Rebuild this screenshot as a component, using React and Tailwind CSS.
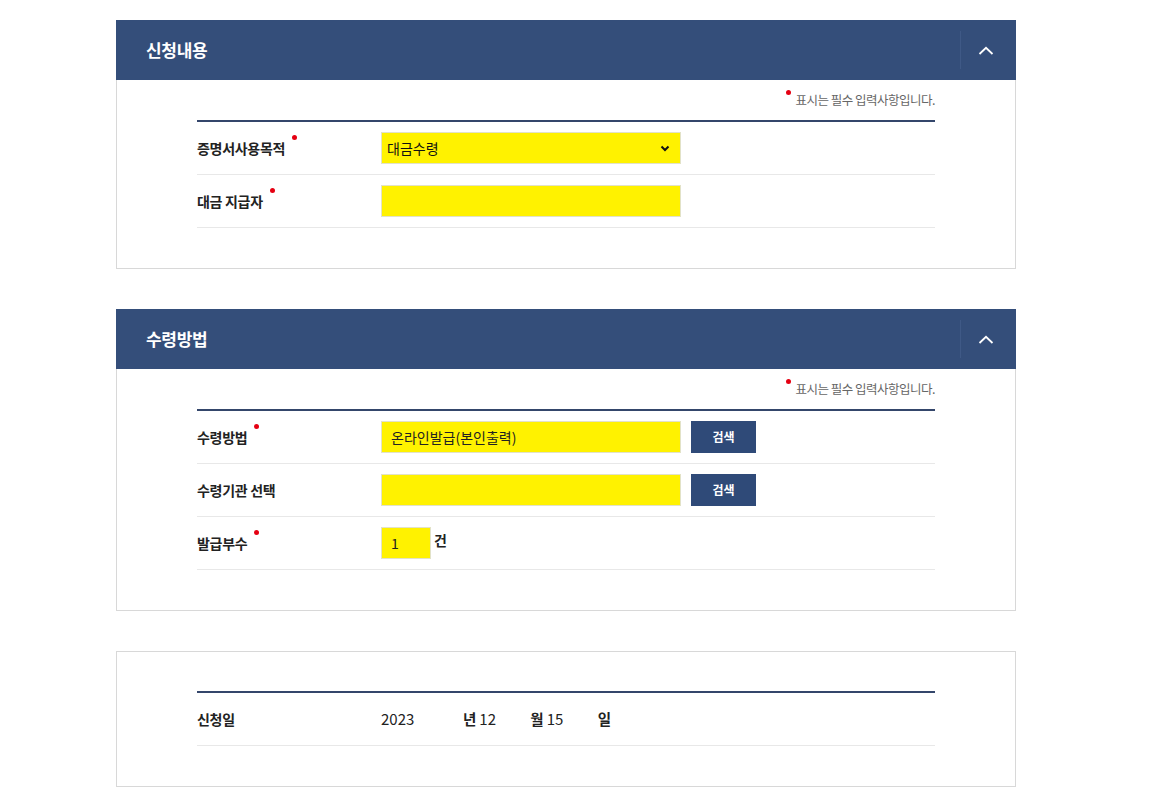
import React from "react";

const font = { fontFamily: '"Noto Sans CJK KR", "Noto Sans", sans-serif' };

function Dot() {
  return <span className="absolute right-[-12px] top-[-3px] w-[5px] h-[5px] rounded-full bg-[#e50012]" />;
}

function Label({ children, required }) {
  return (
    <div className="w-[184px] shrink-0 text-[14px] font-bold text-[#222] tracking-[-0.3px]">
      <span className="relative">
        {children}
        {required && <Dot />}
      </span>
    </div>
  );
}

function Header({ title }) {
  return (
    <div className="h-[60px] bg-[#344e7a] flex items-center">
      <div className="flex-1 pl-[30px] text-[17px] font-bold text-white tracking-[-0.3px]">{title}</div>
      <div className="h-[38px] w-px bg-[#2b4270] border-r border-[#3f5986]" />
      <div className="w-[55px] pr-[5px] flex items-center justify-center">
        <svg width="16" height="9" viewBox="0 0 16 9" fill="none">
          <path d="M1.5 8 L8 1.8 L14.5 8" stroke="white" strokeWidth="1.8" />
        </svg>
      </div>
    </div>
  );
}

function Note() {
  return (
    <div className="h-[40px] flex items-center justify-end text-[12.5px] text-[#666] tracking-[-0.5px]">
      <span className="relative">
        <span className="absolute left-[-9px] top-[-1px] w-[5px] h-[5px] rounded-full bg-[#e50012]" />
        표시는 필수 입력사항입니다.
      </span>
    </div>
  );
}

function Row({ children }) {
  return <div className="h-[53px] flex items-center border-b border-[#e8e8e8]">{children}</div>;
}

function YInput({ value = "", w = "w-[300px]" }) {
  return (
    <div className={`${w} h-[32px] bg-[#fff200] border border-[#e2e2c8] flex items-center px-[9px] text-[14px] text-[#222]`}>
      {value}
    </div>
  );
}

function Btn() {
  return (
    <div className="ml-[10px] w-[65px] h-[32px] bg-[#2f4a78] text-white text-[12px] font-bold flex items-center justify-center">
      검색
    </div>
  );
}

export default function App() {
  return (
    <div className="bg-white min-h-[796px] pt-[20px]" style={font}>
      <div className="ml-[116px] w-[900px]">
        {/* Section 1 */}
        <section>
          <Header title="신청내용" />
          <div className="border-x border-b border-[#d8d8d8] px-[80px] pb-[40px]">
            <Note />
            <div className="h-[2px] bg-[#34466b]" />
            <Row>
              <Label required>증명서사용목적</Label>
              <div className="w-[300px] h-[32px] bg-[#fff200] border border-[#e2e2c8] flex items-center justify-between pl-[5px] pr-[10px] text-[14px] text-[#111]">
                <span>대금수령</span>
                <svg width="10" height="7" viewBox="0 0 10 7" fill="none">
                  <path d="M1.5 1.5 L5 5 L8.5 1.5" stroke="#111" strokeWidth="2" />
                </svg>
              </div>
            </Row>
            <Row>
              <Label required>대금 지급자</Label>
              <YInput />
            </Row>
          </div>
        </section>

        {/* Section 2 */}
        <section className="mt-[40px]">
          <Header title="수령방법" />
          <div className="border-x border-b border-[#d8d8d8] px-[80px] pb-[40px]">
            <Note />
            <div className="h-[2px] bg-[#34466b]" />
            <Row>
              <Label required>수령방법</Label>
              <YInput value="온라인발급(본인출력)" />
              <Btn />
            </Row>
            <Row>
              <Label>수령기관 선택</Label>
              <YInput />
              <Btn />
            </Row>
            <Row>
              <Label required>발급부수</Label>
              <YInput value="1" w="w-[50px]" />
              <span className="ml-[3px] -mt-[6px] text-[14px] font-bold text-[#222]">건</span>
            </Row>
          </div>
        </section>

        {/* Section 3 */}
        <section className="mt-[40px] border border-[#d8d8d8] px-[80px] pt-[39px] pb-[40px]">
          <div className="h-[2px] bg-[#34466b]" />
          <Row>
            <Label>신청일</Label>
            <span className="w-[82px] text-[15px] text-[#222]">2023</span>
            <span className="text-[14.5px] font-bold text-[#222]">년</span>
            <span className="ml-[3px] w-[51px] text-[15px] text-[#222]">12</span>
            <span className="text-[14.5px] font-bold text-[#222]">월</span>
            <span className="ml-[3px] w-[51px] text-[15px] text-[#222]">15</span>
            <span className="text-[14.5px] font-bold text-[#222]">일</span>
          </Row>
        </section>
      </div>
    </div>
  );
}
